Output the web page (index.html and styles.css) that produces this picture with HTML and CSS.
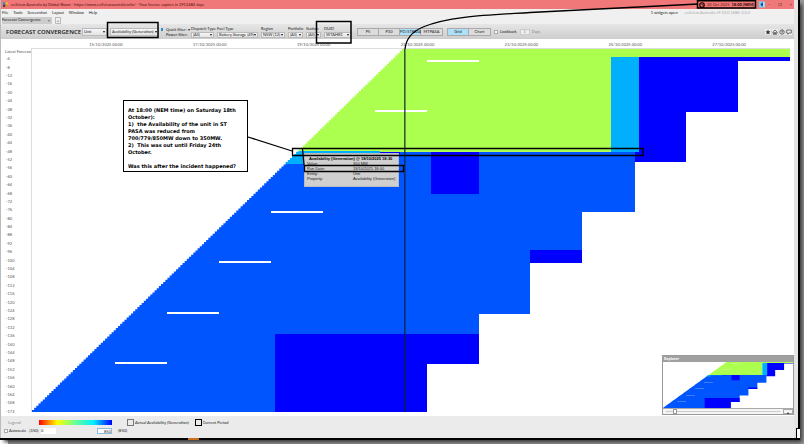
FILE: index.html
```html
<!DOCTYPE html>
<html lang="en">
<head>
<meta charset="utf-8">
<title>ez2view Australia</title>
<link rel="stylesheet" href="styles.css">
</head>
<body>
<div class="window">
  <header class="titlebar">
    <svg class="app-icon" viewBox="0 0 6 6"><path fill="#3a8ad8" d="M0 0h3v3H0z"/><path fill="#f5b21c" d="M3 0h3v3H3z"/><path fill="#444" d="M0 3h3v3H0z"/><path fill="#d84" d="M3 3h3v3H3z"/></svg>
    <span class="caption">ez2view Australia by Global-Roam - https://www.ez2viewaustralia.info/ - Your licence expires in 2913484 days</span>
    <span class="clock"><svg viewBox="0 0 8 8"><circle cx="4" cy="4" r="3" fill="none" stroke="#200" stroke-width="1.6"/><path d="M4 2v2h2" fill="none" stroke="#200"/></svg>20 Oct 2025 <b>18:00 (NEM)</b></span>
    <svg class="badge" viewBox="0 0 8 8"><path fill="#6bd0f5" d="M0 0h8v8H0z"/><path fill="#126" d="M5 1 2 4l3 3z"/><path fill="#fff" d="M6 1h1v6H6z"/></svg>
    <span class="window-buttons"><button aria-label="Minimize">–</button><button aria-label="Restore">❐</button><button aria-label="Close">×</button></span>
  </header>
  <nav class="menubar">
    <a href="#">File</a><a href="#">Tools</a><a href="#">Screenshot</a><a href="#">Layout</a><a href="#">Window</a><a href="#">Help</a>
    <span class="status"><span>1 widgets open</span><span class="dim">ez2view Australia v9.10.0.1686-2.0.2</span></span>
  </nav>
  <div class="tabs"><span class="tab">Forecast Convergence <button aria-label="Close tab">×</button></span><button class="add" aria-label="Add tab">+</button></div>
  <div class="toolbar">
    <h1>FORECAST CONVERGENCE</h1>
    <span class="select unit"><select aria-label="Level"><option>Unit</option></select></span>
    <span class="select property"><select aria-label="Property"><option>Availability (Generation)</option></select></span>
    <i class="marker"></i>
    <div class="filters"><span>Quick filter: ▾</span><span>Power filter:</span></div>
    <label class="field dispatch">Dispatch Type<span class="select"><select><option>(All)</option></select></span></label>
    <label class="field fuel">Fuel Type<span class="select"><select><option>Battery Storage (49)</option></select></span></label>
    <label class="field region">Region<span class="select"><select><option>NSW (12)</option></select></span></label>
    <label class="field small">Portfolio<span class="select"><select><option>(All)</option></select></span></label>
    <label class="field small">Station<span class="select"><select><option>(All)</option></select></span></label>
    <label class="field duid">DUID<span class="select"><select><option>WTAHB1</option></select></span></label>
    <div class="group modes"><button>P5</button><button>P30</button><button class="on">PD/STPASA</button><button>MTPASA</button></div>
    <div class="group"><button class="on">Grid</button><button>Chart</button></div>
    <label class="lookback"><input type="checkbox"> Lookback</label>
    <label class="days"><input type="text" value="1" size="1"> Days</label>
    <div class="tools">
      <button aria-label="Favourite"><svg viewBox="0 0 12 12"><path fill="#333" d="m6 1 1.5 3.4 3.7.4-2.8 2.4.9 3.8L6 9l-3.3 2 .9-3.8L.8 4.8l3.7-.4z"/></svg></button>
      <button aria-label="Home"><svg viewBox="0 0 12 12"><path fill="none" stroke="#333" stroke-width="1.4" d="M1 6.500 6 2l5 4.500M2.500 6v4.500h7V6M5 10V7h2v3"/></svg></button>
      <button aria-label="Help"><svg viewBox="0 0 12 12"><circle cx="6" cy="6" r="4.500" fill="none" stroke="#333" stroke-width="1.400"/><path fill="none" stroke="#333" stroke-width="1.400" d="M4.500 5q0-1.500 1.500-1.500T7.500 5Q7.500 6 6 6.500V9"/></svg></button>
      <button aria-label="Comment"><svg viewBox="0 0 12 12"><path fill="none" stroke="#333" stroke-width="1.400" d="M1.500 2h9v6H6l-2.500 2.500V8h-2z"/></svg></button>
    </div>
  </div>
  <main class="plot">
    <div class="dates"><span>15/10/2025 00:00</span><span>17/10/2025 00:00</span><span>19/10/2025 00:00</span><span>21/10/2025 00:00</span><span>23/10/2025 00:00</span><span>25/10/2025 00:00</span><span>27/10/2025 00:00</span></div>
    <div class="rows" id="rows"><span class="latest">Latest Forecast</span></div>
    <div class="canvas">
      <svg class="map" viewBox="0 0 758 363" preserveAspectRatio="none" shape-rendering="crispEdges">
        <defs>
          <clipPath id="stairs"><path id="stairs-path"/></clipPath>
          <g id="heat">
            <g clip-path="url(#stairs)">
              <path fill="#adff4f" d="M0 0H758V8H579V103H0z"/>
              <path fill="#0055ff" d="M0 103H603V163H550V214H498V265H447V315H395V363H0z"/>
              <path fill="#00b0ff" d="M579 8H607V103H579zM200 102H348V105H276V115H200z"/>
              <path fill="#0000ff" d="M607 8H758V12H706V63H654V113H603V103H607zM348 103H368V105H348zM399 103H447V145H399zM498 201H550V214H498zM243 285H447V315H395V363H243z"/>
              <path fill="#fff" d="M395 11h52v2h-52zM343 61h52v2h-52zM239 162h52v2h-52zM187 212h52v2h-52zM135 263h52v2h-52zM83 313h52v2H83z"/>
            </g>
          </g>
        </defs>
        <use href="#heat"/>
      </svg>
    </div>
  </main>
  <footer class="legend">
    <span class="legend-title">Legend</span>
    <span class="ramp"></span>
    <span class="keys"><span><i class="swatch"></i>Actual Availability (Generation)</span><span><i class="swatch dark"></i>Current Period</span></span>
    <label class="auto"><input type="checkbox">Autoscale <span class="low">(350)</span></label>
    <span class="range"><input aria-label="Minimum" value="0"><input class="max" aria-label="Maximum" value="850"></span>
    <span class="high">(850)</span>
  </footer>
  <aside class="explorer">
    <div class="explorer-title">Explorer</div>
    <svg class="mini" viewBox="0 0 758 363" preserveAspectRatio="none"><use href="#heat"/></svg>
    <div class="explorer-bar"><input type="range" aria-label="Zoom" value="6"><button aria-label="Collapse">▴</button></div>
  </aside>
</div>
<div class="task-mark"></div>
<div class="corner"></div>
<div class="tooltip">
  <b>Availability (Generation) @ 18/10/2025 18:30</b>
  <dl><dt>Value:</dt><dd>350 MW</dd><dt>Run Date:</dt><dd>18/10/2025 18:00</dd><dt>Entity:</dt><dd>Unit</dd><dt>Property:</dt><dd>Availability (Generation)</dd></dl>
</div>
<div class="note">
  <p>At 18:00 (NEM time) on Saturday 18th October):<br>1)&nbsp; the Availability of the unit in ST PASA was reduced from 700/779/850MW down to 350MW.<br>2)&nbsp; This was out until Friday 24th October.</p>
  <p>Was this after the incident happened?</p>
</div>
<svg class="ink" width="804" height="444" viewBox="0 0 804 444" fill="none" stroke="#000">
  <path stroke="#123" stroke-opacity=".75" stroke-width="1.600" d="M404.800 49V412"/>
  <path stroke-width="1.300" d="M405 49C406 39 411 32 423 27C449 16 490 15 530 12.500L698 4"/>
  <path stroke-width="1.300" d="M248 137 292 151M302.500 149 304 165"/>
  <path stroke-width="1.300" d="M292.500 148.500H643V155.500H292.500zM304.500 165.500H403.500V171.500H304.500z"/>
  <path stroke-width="1.500" d="M107.500 22.500H158V37.500H107.500zM316.500 21.500H351V43H316.500zM697.500 .800H755.500V8H697.500z"/>
</svg>
<script src="app.js"></script>
</body>
</html>
```
FILE: styles.css
```css
* { box-sizing: border-box; }
body {
  margin: 0;
  height: 100vh;
  padding: 0 6px 6px 0;
  background: linear-gradient(90deg, #fff 0 8px, transparent 8px) bottom left / 100% 4px no-repeat, #999;
  font: 4px/6px Lato, sans-serif;
  color: #222;
  overflow: hidden;
}
button, input, select { font: inherit; color: inherit; margin: 0; padding: 0; border: 0; background: none; border-radius: 0; }
a { color: inherit; text-decoration: none; }
.window {
  position: relative;
  display: flex;
  flex-direction: column;
  height: 100%;
  background: #fff;
  border-right: 4px solid #e4e4e4;
  border-left: 1px solid #bbb;
  box-shadow: 1px 1px 0 1px #000, 4px 4px 4px #333;
}
.titlebar { display: flex; align-items: center; height: 9px; flex: none; background: #f07878; padding: 0 2px; }
.app-icon { width: 5px; height: 5px; margin-right: 3px; }
.caption { flex: 1; color: #511; }
.clock { display: flex; align-items: center; gap: 2px; width: 53px; color: #611; white-space: nowrap; }
.clock svg { width: 6px; height: 6px; flex: none; }
.clock b { color: #200; }
.badge { width: 6px; height: 7px; margin-left: 7px; }
.window-buttons { display: flex; justify-content: space-between; width: 24px; margin-left: 3px; }
.menubar { display: flex; gap: 5px; height: 8px; flex: none; padding: 1px 1px; background: #f0f0f0; }
.status { display: flex; gap: 7px; margin-left: auto; margin-right: 43px; }
.dim { color: #aaa; }
.tabs { display: flex; gap: 3px; height: 7px; flex: none; background: #f0f0f0; padding-left: 1px; }
.tab { display: flex; justify-content: space-between; width: 50px; padding: 0 2px 0 0; background: #ccc; }
.add { width: 6px; border: 1px solid #bbb; line-height: 4px; }
.toolbar { display: flex; align-items: center; height: 15px; flex: none; background: linear-gradient(#e6e6e6, #cdcdcd); padding: 0 2px 0 5px; }
h1 { margin: 0; width: 76px; font: 600 6px/8px "Noto Sans", sans-serif; color: #222; white-space: nowrap; }
.select { position: relative; display: block; height: 6px; background: linear-gradient(#f6f6f6, #e4e4e4); border: 1px solid #bbb; }
.select::after { content: ""; position: absolute; right: 1px; top: 1px; border: 1px solid transparent; border-top: 2px solid #111; }
.select select { display: block; width: 100%; height: 4px; line-height: 4px; appearance: none; padding-left: 1px; }
.unit, .property { height: 8px; padding-top: 1px; }
.unit::after, .property::after { top: 2px; }
.unit { width: 25px; }
.property { width: 49px; margin-left: 3px; }
.marker { width: 2px; height: 3px; margin: 0 3px 4px 2px; background: #2a90c8; }
.filters { display: flex; flex-direction: column; width: 24px; line-height: 5px; white-space: nowrap; }
.field { display: block; margin-left: 3px; line-height: 6px; white-space: nowrap; }
.dispatch { width: 23px; margin-left: 1px; }
.fuel { width: 41px; }
.region { width: 24px; }
.small { width: 15px; }
.duid { width: 27px; }
.group { display: flex; height: 8px; margin-left: 4px; border: 1px solid #aaa; }
.modes { margin-left: 6px; }
.group button { width: 21px; line-height: 6px; border-right: 1px solid #aaa; background: #dcdcdc; }
.group button:last-child { border: 0; }
.group .on { background: #aee0fa; }
.lookback, .days { display: flex; align-items: center; gap: 2px; margin-left: 3px; }
.lookback input, .auto input { appearance: none; flex: none; width: 4px; height: 4px; border: 1px solid #aaa; background: #fff; }
.days { color: #888; }
.days input { width: 10px; height: 6px; border: 1px solid #ccc; background: #eee; text-align: center; }
.tools { display: flex; gap: 1px; margin-left: auto; }
.tools button { width: 6px; height: 6px; background: #eee; }
.tools svg { display: block; width: 6px; height: 6px; }
.plot { flex: 1; min-height: 0; display: grid; grid-template: 10px 1fr / 31px 1fr; padding: 0 4px 4px 0; }
.dates { grid-column: 1 / 3; display: grid; grid-template-columns: repeat(7, 1fr); padding: 3px 9px 0 53px; text-align: center; color: #555; }
.rows { display: grid; grid-template-rows: 6px; grid-auto-rows: 1fr; align-items: center; margin-bottom: -4px; padding-left: 5px; color: #555; min-height: 0; }
.rows span { white-space: nowrap; min-height: 0; }
.rows .latest { margin-left: -1px; }
.canvas { min-height: 0; border-left: 1px solid #ddd; border-top: 1px solid #ddd; margin: -1px 0 0 -1px; }
.map { display: block; width: 100%; height: 100%; }
.legend { display: grid; grid-template: 9px 8px / 31px 71px 1fr; column-gap: 6px; align-items: center; flex: none; padding: 2px 0 3px 3px; background: #ebebeb; white-space: nowrap; }
.legend-title { padding-left: 4px; color: #888; }
.ramp { height: 5px; margin-left: -2px; background: linear-gradient(90deg, #f00, #ff0 25%, #6f9 50%, #0ef 75%, #00f); }
.keys { display: flex; gap: 6px; margin-left: 9px; }
.keys span { display: flex; align-items: center; gap: 1px; }
.swatch { width: 7px; height: 7px; border: 1px solid #777; }
.dark { border-color: #000; }
.auto { display: flex; align-items: center; gap: 1px; }
.low { margin-left: 2px; }
.range { display: flex; justify-content: space-between; }
.range input { width: 15px; height: 6px; background: #fff; }
.range .max { border: 1px solid #8bd; text-align: right; line-height: 4px; }
.explorer { position: absolute; right: 0; bottom: 23px; width: 132px; height: 60px; display: flex; flex-direction: column; border: 1px solid #999; background: #fff; }
.explorer-title { height: 6px; line-height: 5px; padding-left: 1px; background: #a0a0a0; color: #fff; font-weight: 700; }
.mini { display: block; width: 100%; height: 46px; }
.explorer-bar { display: flex; flex: 1; min-height: 0; gap: 3px; padding-left: 3px; background: #f4f4f4; border-top: 1px solid #aaa; }
.explorer-bar input { flex: 1; min-width: 0; height: 5px; appearance: none; background: linear-gradient(#ccc, #ccc) center / 100% 1px no-repeat; }
.explorer-bar input::-webkit-slider-thumb { appearance: none; width: 4px; height: 5px; border: 1px solid #999; background: #fff; }
.explorer-bar button { width: 10px; line-height: 5px; border: 1px solid #aaa; }
.task-mark { position: absolute; left: 188px; bottom: 4px; width: 11px; height: 2px; background: #c87020; }
.corner { position: absolute; right: 4px; bottom: 5px; width: 4px; height: 11px; border: 1px solid #000; border-right: 0; background: #fff; }
.tooltip { position: absolute; left: 304px; top: 153px; width: 95px; height: 34px; padding: 2px 2px; background: #d0d0d0; border: 1px solid #bbb; font: 4px/5px "Liberation Sans", sans-serif; color: #222; white-space: nowrap; }
.tooltip b { display: block; padding-left: 2px; color: #000; }
.tooltip dl { display: grid; grid-template-columns: 46px 1fr; margin: 0; }
.tooltip dd { margin: 0; }
.note { position: absolute; left: 123px; top: 100px; width: 125px; height: 72px; padding: 6px 7px 6px 4px; border: 1px solid #000; background: #fff; color: #000; font: 700 5px/7px "DejaVu Sans", sans-serif; }
.note p { margin: 0 0 7px; }
.ink { position: absolute; left: 0; top: 0; pointer-events: none; }
```
FILE: app.js
```js
const rows = document.getElementById('rows');
for (let n = 4; n <= 172; n += 4) {
  const label = document.createElement('span');
  label.textContent = '-' + n;
  rows.append(label);
}

const steps = 173, left = 372, height = 363;
let d = 'M758 0';
for (let i = 1; i <= steps; i++) {
  d += 'H' + (left * (1 - i / steps)) + 'V' + (height * i / steps);
}
document.getElementById('stairs-path').setAttribute('d', d + 'H758z');
```
